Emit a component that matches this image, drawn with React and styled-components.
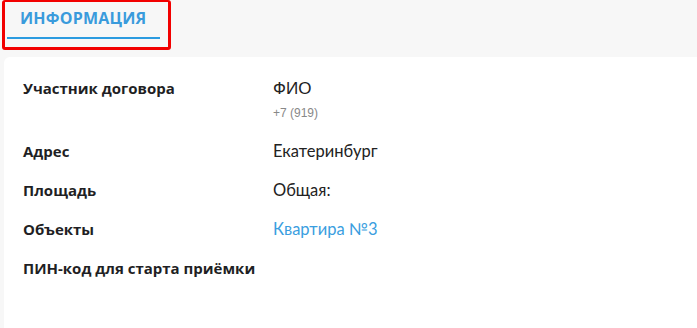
import React from 'react';
import styled, { createGlobalStyle } from 'styled-components';

const GlobalStyle = createGlobalStyle`
  html, body {
    margin: 0;
    padding: 0;
    background: #f7f7f7;
  }
  body {
    font-family: Lato, "Open Sans", sans-serif;
  }
`;

const rows = [
  { label: 'Участник договора', value: 'ФИО', sub: '+7 (919)', kind: 'name' },
  { label: 'Адрес', value: 'Екатеринбург' },
  { label: 'Площадь', value: 'Общая:' },
  { label: 'Объекты', value: 'Квартира №3', kind: 'link' },
  { label: 'ПИН-код для старта приёмки', value: '' },
];

export default function App() {
  return (
    <Page>
      <GlobalStyle />
      <TabBar>
        <Highlight>
          <Tab>ИНФОРМАЦИЯ</Tab>
        </Highlight>
      </TabBar>
      <Card>
        {rows.map((row) => (
          <Row key={row.label}>
            <Label>{row.label}</Label>
            <Value>
              {row.kind === 'name' ? (
                <>
                  <Name>{row.value}</Name>
                  <Phone>{row.sub}</Phone>
                </>
              ) : (
                <ValueText $link={row.kind === 'link'}>{row.value}</ValueText>
              )}
            </Value>
          </Row>
        ))}
      </Card>
    </Page>
  );
}

const Page = styled.div`
  width: 697px;
  height: 328px;
  overflow: hidden;
  background: #f7f7f7;
`;

const TabBar = styled.div`
  height: 57px;
  padding-left: 2px;
  display: flex;
  align-items: flex-start;
`;

const Highlight = styled.div`
  box-sizing: border-box;
  width: 169px;
  height: 50px;
  border: 3px solid #f20000;
  border-top-width: 2px;
  border-radius: 3px;
  padding: 0 8px 0 2px;
`;

const Tab = styled.div`
  box-sizing: border-box;
  height: 37px;
  padding: 5px 0 0 13px;
  border-bottom: 2px solid #2b9be0;
  font-family: "Open Sans", sans-serif;
  font-weight: 700;
  font-size: 16px;
  letter-spacing: 0.2px;
  color: #3a9bdc;
`;

const Card = styled.div`
  margin-left: 4px;
  height: 271px;
  background: #ffffff;
  border-top-left-radius: 6px;
  padding: 21px 0 0 19px;
  display: flex;
  flex-direction: column;
  gap: 19px;
`;

const Row = styled.div`
  display: flex;
  align-items: flex-start;
`;

const Label = styled.div`
  width: 250px;
  font-family: "Open Sans", sans-serif;
  font-weight: 700;
  font-size: 15px;
  line-height: 20px;
  color: #1f1f24;
`;

const Value = styled.div`
  display: flex;
  flex-direction: column;
`;

const Name = styled.div`
  font-family: "Liberation Sans", Arial, sans-serif;
  font-size: 17px;
  line-height: 20px;
  color: #222;
  margin-top: 1px;
`;

const Phone = styled.div`
  font-family: "Liberation Sans", Arial, sans-serif;
  font-size: 12px;
  line-height: 14px;
  margin-top: 7px;
  margin-bottom: 2px;
  color: #888;
`;

const ValueText = styled.div`
  font-family: Lato, sans-serif;
  font-size: 16.5px;
  line-height: 20px;
  min-height: 20px;
  color: ${(p) => (p.$link ? '#3a9ee0' : '#222')};
`;
